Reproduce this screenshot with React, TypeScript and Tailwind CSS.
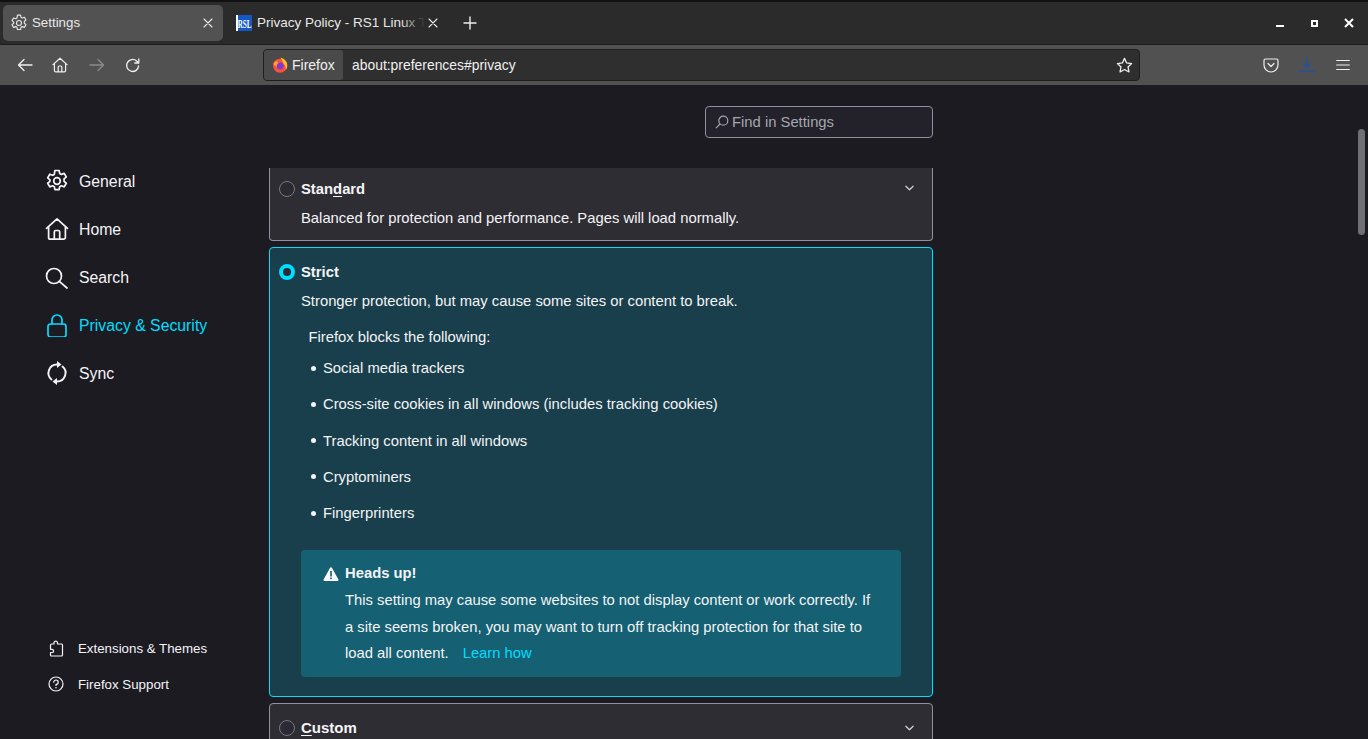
import React from "react";

const s = { fill: "none", stroke: "currentColor", strokeLinecap: "round", strokeLinejoin: "round" } as const;

function Gear({ size, sw = 1.3 }: { size: number; sw?: number }) {
  return (
    <svg width={size} height={size} viewBox="0 0 16 16" {...s} strokeWidth={sw}>
      <path d="M6.6 1h2.8l.4 2 1.1.6 1.9-.7 1.4 2.4-1.5 1.3v1.6l1.5 1.3-1.4 2.4-1.9-.7-1.1.6-.4 2H6.6l-.4-2-1.1-.6-1.9.7-1.4-2.4 1.5-1.3V7.2L1.8 5.9l1.4-2.4 1.9.7 1.1-.6z" />
      <circle cx="8" cy="8" r="2.2" />
    </svg>
  );
}

function Home({ size, sw = 1.3 }: { size: number; sw?: number }) {
  return (
    <svg width={size} height={size} viewBox="0 0 16 16" {...s} strokeWidth={sw}>
      <path d="M1 7.6 8 1.2l7 6.4M2.4 6.6v7a1.2 1.2 0 0 0 1.2 1.2h8.8a1.2 1.2 0 0 0 1.2-1.2v-7M6.2 14.8V10a1 1 0 0 1 1-1h1.6a1 1 0 0 1 1 1v4.8" />
    </svg>
  );
}

function NavItem({ icon, label, active }: { icon: React.ReactNode; label: string; active?: boolean }) {
  return (
    <div className={`flex h-12 items-center gap-[10px] pl-[45px] text-[15.8px] ${active ? "text-[#00ddff]" : "text-[#f4f4f7]"}`}>
      <span className="flex w-6 justify-center">{icon}</span>
      <span className="mt-[2px]">{label}</span>
    </div>
  );
}

function Chevron() {
  return (
    <svg width="9" height="6" viewBox="0 0 10 6" {...s} strokeWidth={1.4} className="text-[#d0d0d6]">
      <path d="M1 1l4 4 4-4" />
    </svg>
  );
}

function Radio({ on }: { on?: boolean }) {
  if (on) {
    return <span className="block h-4 w-4 rounded-full border-[4.5px] border-[#00ddff] bg-[#2b2a33]" />;
  }
  return <span className="block h-4 w-4 rounded-full border border-[#77777f] bg-[#2b2a33]" />;
}

function Li({ children }: { children: React.ReactNode }) {
  return (
    <li className="flex h-[36.25px] items-center">
      <span className="mr-[7px] ml-[10px] h-[5px] w-[5px] rounded-full bg-[#f4f4f7]" />
      {children}
    </li>
  );
}

export default function App() {
  return (
    <div className="relative flex h-[739px] w-[1368px] flex-col overflow-hidden bg-[#1c1b22] [font-family:Liberation_Sans,Arial,sans-serif] text-[#f4f4f7]">
      {/* Tab strip */}
      <div className="flex h-[45px] shrink-0 items-center border-t-2 border-t-[#111] border-b border-b-[#1c1c1c] bg-[#2b2b2b] pl-[3px] text-[13.3px]">
        <div className="flex h-[36px] w-[220px] items-center rounded-[5px] bg-[#525252] pr-[10px] pl-[7px] text-[#e8e8e8]">
          <Gear size={18} sw={1} />
          <span className="ml-[4px] flex-1">Settings</span>
          <svg width="10" height="10" viewBox="0 0 10 10" {...s} strokeWidth={1.1}><path d="M1 1l8 8M9 1l-8 8" /></svg>
        </div>
        <div className="ml-[13px] flex h-[36px] w-[203px] items-center text-[#e8e8e8]">
          <span className="flex h-4 w-4 shrink-0 items-center justify-center overflow-hidden border-l-2 border-l-white bg-[#1558c4] [font-family:Liberation_Serif,serif] text-[13px] leading-none font-bold text-white"><span className="scale-x-[.55]">RSL</span></span>
          <span className="relative ml-[5px] w-[168px] shrink-0 overflow-hidden text-[13.5px] whitespace-nowrap">
            Privacy Policy - RS1 Linux Tutorials
            <span className="absolute top-0 right-0 bottom-0 w-6 bg-gradient-to-r from-transparent to-[#2b2b2b]" />
          </span>
          <svg className="ml-[3px] shrink-0" width="10" height="10" viewBox="0 0 10 10" {...s} strokeWidth={1.1}><path d="M1 1l8 8M9 1l-8 8" /></svg>
        </div>
        <svg className="ml-[24px] text-[#eee]" width="14" height="14" viewBox="0 0 14 14" {...s} strokeWidth={1.4}><path d="M7 1v12M1 7h12" /></svg>
        <div className="ml-auto flex items-center pr-[14px] text-white">
          <span className="mt-[5px] h-[2px] w-2 bg-white" />
          <span className="ml-[27px] flex h-[7px] w-[7px] items-center justify-center bg-white"><span className="h-[3px] w-[3px] bg-[#2b2b2b]" /></span>
          <svg className="ml-[26px]" width="10" height="10" viewBox="0 0 10 10" stroke="currentColor" strokeWidth={2}><path d="M1 1l8 8M9 1l-8 8" /></svg>
        </div>
      </div>

      {/* Toolbar */}
      <div className="flex h-[40px] shrink-0 items-center bg-[#515151] text-[#f0f0f0]">
        <svg className="ml-[17px]" width="16" height="14" viewBox="0 0 16 14" {...s} strokeWidth={1.3}><path d="M15 7H1.5M7 1.5 1.5 7 7 12.5" /></svg>
        <span className="ml-[19px] flex"><Home size={16} sw={1.2} /></span>
        <svg className="ml-[21px] text-[#8c8c8c]" width="16" height="14" viewBox="0 0 16 14" {...s} strokeWidth={1.3}><path d="M1 7h13.5M9 1.5 14.5 7 9 12.5" /></svg>
        <svg className="ml-[20px]" width="15" height="15" viewBox="0 0 15 15" {...s} strokeWidth={1.3}><path d="M13.6 7.8A6 6 0 1 1 11.6 3l2 1.8M13.8 1v4h-4" /></svg>

        <div className="ml-[123px] flex h-[32px] w-[877px] items-center rounded-[4px] border border-[#1e1e1e] bg-[#2f2f2f] pr-[6px]">
          <div className="flex h-[30px] w-[79px] items-center rounded-[3px] bg-[#4a4a4a] pl-[8px] text-[14px]">
            <svg width="16" height="16" viewBox="0 0 16 16" className="shrink-0">
              <circle cx="8" cy="8.8" r="7" fill="#ff4f3c" />
              <path d="M8.500 .8c3.400.6 6.800 3.400 6.800 7.600 0 1.800-.6 3.400-1.600 4.600.4-2.800-.4-5.200-2.400-6.600C10.800 4.400 9.600 2.600 8.500 .8z" fill="#ffbd2e" />
              <circle cx="8.200" cy="9" r="3.400" fill="#7b3bd1" />
              <path d="M1.300 7C2.300 4.800 3.800 4 5.200 3.600 4.900 5 5.600 6 7 6 5.500 6.400 4.500 7.500 5 9.500 3.500 9.500 2 8.500 1.300 7z" fill="#ff9a2e" />
            </svg>
            <span className="ml-[4px]">Firefox</span>
          </div>
          <span className="ml-[9px] flex-1 text-[13.9px]">about:preferences#privacy</span>
          <svg width="17" height="17" viewBox="0 0 16 16" {...s} strokeWidth={1.2}><path d="M8 1.300l2 4.300 4.700.6-3.400 3.200.9 4.700L8 11.800l-4.200 2.300.9-4.700-3.400-3.200 4.700-.6z" /></svg>
        </div>

        <svg className="ml-[123px]" width="16" height="15" viewBox="0 0 16 15" {...s} strokeWidth={1.2}><path d="M2.500 1h11A1.500 1.500 0 0 1 15 2.500V7a7 7 0 0 1-14 0V2.500A1.500 1.500 0 0 1 2.500 1zM5 5.500l3 3 3-3" /></svg>
        <svg className="ml-[19px] text-[#2a4f9e]" width="18" height="16" viewBox="0 0 18 16" {...s} strokeWidth={1.6}><path d="M9 1v9M5.500 7 9 10.500 12.500 7M1 14h16" /></svg>
        <svg className="ml-[20px]" width="14" height="12" viewBox="0 0 14 12" {...s} strokeWidth={1.2}><path d="M.7 1.500h12.600M.7 6h12.600M.7 10.500h12.600" /></svg>
      </div>

      {/* Page */}
      <div className="flex min-h-0 flex-1">
        {/* Sidebar */}
        <aside className="flex w-[269px] shrink-0 flex-col pt-[72px]">
          <NavItem label="General" icon={<Gear size={24} sw={1.15} />} />
          <NavItem label="Home" icon={<Home size={24} sw={1.15} />} />
          <NavItem
            label="Search"
            icon={
              <svg width="24" height="24" viewBox="0 0 24 24" {...s} strokeWidth={1.7}>
                <circle cx="9" cy="11" r="7.500" />
                <path d="M14.300 16.300 22 23" />
              </svg>
            }
          />
          <NavItem
            active
            label="Privacy & Security"
            icon={
              <svg width="24" height="24" viewBox="0 0 24 24" {...s} strokeWidth={1.7}>
                <rect x="3" y="11" width="18" height="13" rx="2.500" />
                <path d="M7 11V7a5 5 0 0 1 10 0v4" />
              </svg>
            }
          />
          <NavItem
            label="Sync"
            icon={
              <svg width="24" height="24" viewBox="0 0 24 24" {...s} strokeWidth={1.9}>
                <path d="M12 3.500A8.500 8.500 0 0 0 6.500 18.500M12 20.500A8.500 8.500 0 0 0 17.500 5.500" />
                <path d="M12 0v7l4.500-3.500zM12 17v7l-4.500-3.500z" fill="currentColor" stroke="none" />
              </svg>
            }
          />
          <div className="mt-auto flex flex-col pb-[37px] text-[13.3px] text-[#f4f4f7]">
            <div className="flex h-9 items-center pl-[48px]">
              <svg width="16" height="17" viewBox="0 0 16 17" {...s} strokeWidth={1.2} className="shrink-0">
                <path d="M6 2.500a1.800 1.800 0 0 1 3.500 0V4h4a1 1 0 0 1 1 1v10a1 1 0 0 1-1 1H3.500a1 1 0 0 1-1-1v-2.500H4a1.600 1.600 0 0 0 0-3.200H2.500V5a1 1 0 0 1 1-1H6z" />
              </svg>
              <span className="mt-[2px] ml-[14px]">Extensions &amp; Themes</span>
            </div>
            <div className="flex h-9 items-center pl-[48px]">
              <svg width="16" height="16" viewBox="0 0 16 16" {...s} strokeWidth={1.2} className="shrink-0">
                <circle cx="8" cy="8" r="7" />
                <path d="M5.800 6.200A2.200 2.200 0 1 1 8 8.400v1" />
                <path d="M8 11.700v.1" strokeWidth={1.6} />
              </svg>
              <span className="mt-[2px] ml-[14px]">Firefox Support</span>
            </div>
          </div>
        </aside>

        {/* Main */}
        <main className="flex w-[664px] shrink-0 flex-col text-[14.8px]">
          <div className="flex h-[83px] shrink-0 justify-end pt-[21px]">
            <div className="flex h-[32px] w-[228px] items-center rounded-[4px] border border-[#8f8f9d] bg-[#23222b] pl-[9px] text-[14.8px] text-[#a6a6ad]">
              <svg width="14" height="14" viewBox="0 0 14 14" {...s} strokeWidth={1.2}>
                <circle cx="8.300" cy="5.700" r="4.500" />
                <path d="M5 9l-3.800 3.800" />
              </svg>
              <span className="ml-[3px]">Find in Settings</span>
            </div>
          </div>

          <div className="flex min-h-0 flex-1 flex-col gap-[6px] overflow-hidden">
            {/* Standard */}
            <section className="h-[73px] shrink-0 rounded-b-[4px] border border-t-0 border-[#8f8f9d] bg-[#2e2d33] pr-[18px] pl-[9px]">
              <div className="flex h-[41px] items-center">
                <Radio />
                <strong className="mt-[2px] ml-[6px] flex-1 font-bold">
                  Stan<span className="underline underline-offset-2">d</span>ard
                </strong>
                <span className="mb-[1px] flex"><Chevron /></span>
              </div>
              <p className="pl-[22px] leading-[18px]">Balanced for protection and performance. Pages will load normally.</p>
            </section>

            {/* Strict */}
            <section className="h-[450px] shrink-0 rounded-[4px] border border-[#00ddff] bg-[#183f4b] pr-[31px] pl-[9px]">
              <div className="flex h-[47px] items-center">
                <Radio on />
                <strong className="mt-[2px] ml-[6px] font-bold">
                  St<span className="underline underline-offset-2">r</span>ict
                </strong>
              </div>
              <div className="ml-[22px]">
                <p className="-mt-[3px] leading-[18px]">Stronger protection, but may cause some sites or content to break.</p>
                <p className="mt-[18px] pl-[7.500px] leading-[18px]">Firefox blocks the following:</p>
                <ul className="mt-[4px]">
                  <Li>Social media trackers</Li>
                  <Li>Cross-site cookies in all windows (includes tracking cookies)</Li>
                  <Li>Tracking content in all windows</Li>
                  <Li>Cryptominers</Li>
                  <Li>Fingerprinters</Li>
                </ul>
                <div className="mt-[19px] flex h-[127px] w-[600px] rounded-[4px] bg-[#156072] pt-[14px] pr-[20px] pl-[22px]">
                  <svg className="mt-[2px] shrink-0" width="16" height="16" viewBox="0 0 16 16">
                    <path d="M8 1.200a1 1 0 0 1 .9.5l6.500 11.800a1 1 0 0 1-.9 1.500h-13a1 1 0 0 1-.9-1.500L7.100 1.700A1 1 0 0 1 8 1.200z" fill="#fbfbfe" />
                    <rect x="7.200" y="5" width="1.600" height="5.500" fill="#156072" />
                    <rect x="7.200" y="11.500" width="1.600" height="1.700" fill="#156072" />
                  </svg>
                  <div className="ml-[6px]">
                    <strong className="block leading-[18px] font-bold">Heads up!</strong>
                    <p className="mt-[5px] leading-[26.500px]">
                      This setting may cause some websites to not display content or work correctly. If a site seems broken, you may want to turn off tracking protection for that site to load all content.
                      <span className="ml-[14px] text-[#00ddff]">Learn how</span>
                    </p>
                  </div>
                </div>
              </div>
            </section>

            {/* Custom */}
            <section className="h-[60px] shrink-0 rounded-t-[4px] border border-[#8f8f9d] bg-[#2e2d33] pr-[18px] pl-[9px]">
              <div className="flex h-[47px] items-center">
                <Radio />
                <strong className="mt-[2px] ml-[6px] flex-1 text-[15px] font-bold">
                  <span className="underline underline-offset-2">C</span>ustom
                </strong>
                <span className="flex"><Chevron /></span>
              </div>
            </section>
          </div>
        </main>
      </div>

      {/* Scrollbar thumb */}
      <div className="absolute top-[129px] right-[3px] h-[106px] w-[7px] rounded-full bg-[#6f6f76]" />
    </div>
  );
}
